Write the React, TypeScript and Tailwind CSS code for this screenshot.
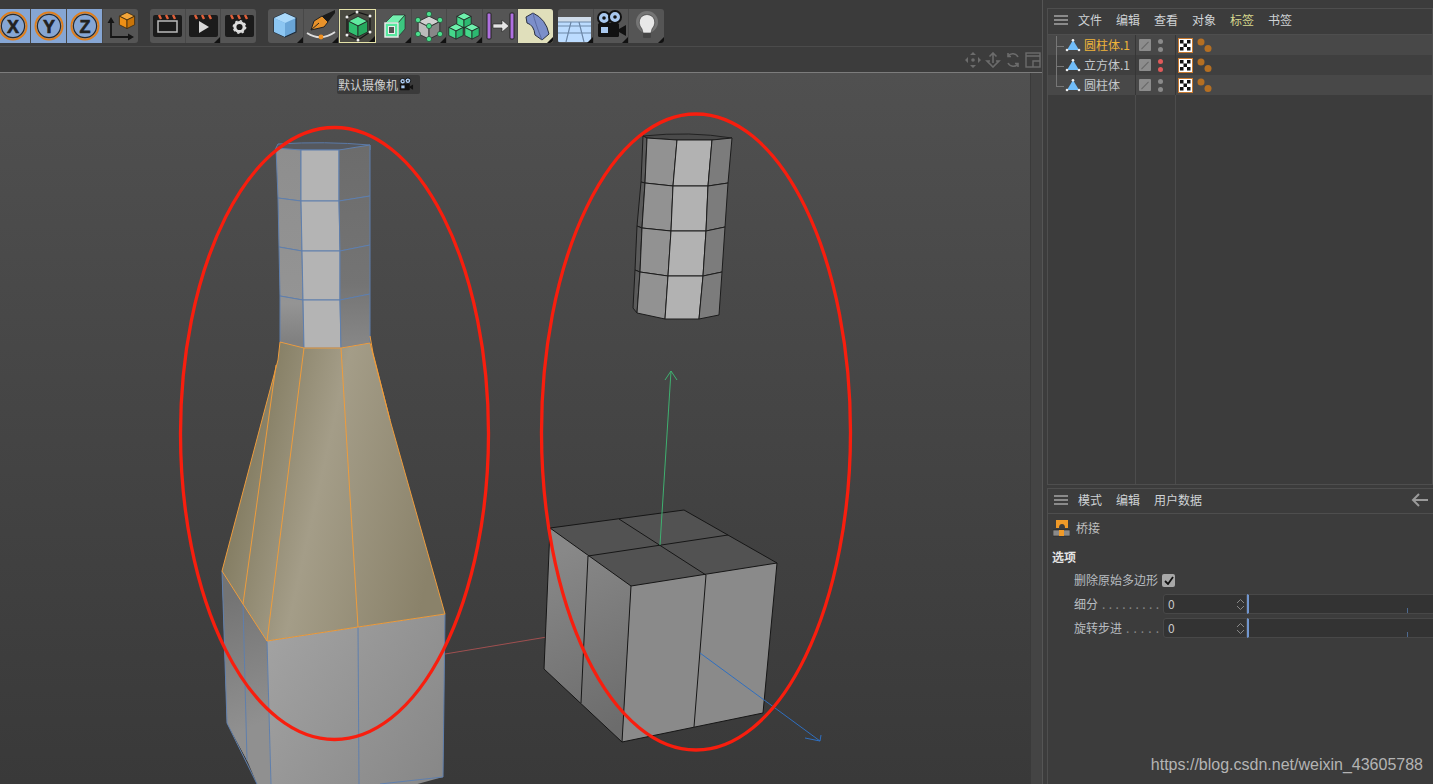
import React from "react";

type P = { children?: React.ReactNode };

const Corner = () => (
  <span className="absolute right-0 bottom-0 w-0 h-0 border-l-[6px] border-l-transparent border-b-[6px] border-b-[#111]" />
);

// toolbar button, icons are drawn in a 34x34 box
const Btn = ({ children, corner, className = "" }: P & { corner?: boolean; className?: string }) => (
  <div className={`relative flex-1 min-w-0 h-full flex items-center justify-center border-r border-[#484848] last:border-r-0 ${className}`}>
    <svg width="34" height="34" viewBox="0 0 34 34" fill="none" className="shrink-0">{children}</svg>
    {corner && <Corner />}
  </div>
);

const Group = ({ children, className = "" }: P & { className?: string }) => (
  <div className={`flex h-[34px] bg-[#555] rounded-[3px] overflow-hidden ${className}`}>{children}</div>
);

const Axis = ({ l }: { l: string }) => (
  <Btn className="bg-[#86a6d4] border-[#4d5a6e]">
    <circle cx="17" cy="17" r="13.5" stroke="#e07f1c" strokeWidth="2" />
    <circle cx="17" cy="17" r="11.6" stroke="#2a2a2a" strokeWidth="1.2" />
    <text x="17" y="23.5" textAnchor="middle" fontSize="18" fontWeight="700" fill="#222" stroke="#222" strokeWidth="0.6" fontFamily="Liberation Sans, sans-serif">{l}</text>
  </Btn>
);

const Clap = ({ children, corner }: P & { corner?: boolean }) => (
  <Btn corner={corner}>
    <rect x="3" y="6" width="29" height="22" rx="2" fill="#1b1b1b" />
    <path d="M9 6l2 4M16 6l2 4M23 6l2 4" stroke="#e0603a" strokeWidth="2.4" />
    {children}
  </Btn>
);

const Cube = ({ x, y, s = 1, top, left, right, stroke = "#222" }: { x: number; y: number; s?: number; top: string; left: string; right: string; stroke?: string }) => (
  <g transform={`translate(${x} ${y}) scale(${s})`} stroke={stroke} strokeWidth={0.8 / s} strokeLinejoin="round">
    <path d="M0 -8L8 -4L0 0L-8 -4Z" fill={top} />
    <path d="M-8 -4L0 0V9L-8 5Z" fill={left} />
    <path d="M8 -4L0 0V9L8 5Z" fill={right} />
  </g>
);

const CameraIcon = ({ w = 34 }: { w?: number }) => (
  <svg width={w} height={w} viewBox="0 0 34 34" fill="none" className="shrink-0">
    <rect x="4" y="14" width="21" height="14" rx="1.5" fill="#111" />
    <circle cx="10" cy="9" r="6" fill="#a9c8ee" stroke="#111" strokeWidth="2" />
    <circle cx="10" cy="9" r="1.8" fill="#111" />
    <circle cx="21" cy="8" r="6" fill="#a9c8ee" stroke="#111" strokeWidth="2" />
    <circle cx="21" cy="8" r="1.8" fill="#111" />
    <rect x="7" y="18" width="7" height="6" fill="#a9c8ee" />
    <path d="M25 20l7-4v11l-7-4z" fill="#111" />
  </svg>
);

const Toolbar = () => (
  <div className="h-[47px] flex items-center pt-[5px] border-b border-[#4b4b4b] bg-[#3b3b3b]">
    <Group className="ml-[-5px] w-[143px] mr-[12px]">
      <Axis l="X" />
      <Axis l="Y" />
      <Axis l="Z" />
      <Btn>
        <path d="M7 13V28H25" stroke="#151515" strokeWidth="1.8" />
        <path d="M7 8l-3.5 6h7zM30 28l-6-3.5v7z" fill="#151515" />
        <Cube x={23} y={11} s={0.95} top="#f4a63a" left="#ee9016" right="#c97408" stroke="#3a2a10" />
      </Btn>
    </Group>
    <Group className="w-[106px] mr-[12px]">
      <Clap>
        <rect x="8" y="12" width="19" height="11" stroke="#bbb" strokeWidth="1.5" />
      </Clap>
      <Clap corner>
        <path d="M13 12l10 6-10 6z" fill="#d8d8d8" />
      </Clap>
      <Clap>
        <circle cx="17.5" cy="18" r="4.6" stroke="#ddd" strokeWidth="3" />
        <circle cx="17.5" cy="18" r="6.2" stroke="#ddd" strokeWidth="1.4" strokeDasharray="2.4 2.4" />
      </Clap>
    </Group>
    <Group className="w-[285px] mr-[5px]">
      <Btn corner>
        <g transform="translate(17 16)">
          <path d="M0 -12L11 -7V7L0 12L-11 7V-7Z" fill="#6aa6d8" stroke="#1d2a38" strokeWidth="1.2" strokeLinejoin="round" />
          <path d="M0 -12L11 -7L0 -2L-11 -7Z" fill="#a9d8fa" />
          <path d="M-11 -7L0 -2V12L-11 7Z" fill="#8cc6f2" />
        </g>
      </Btn>
      <Btn corner>
        <path d="M7 21L10 12L18 7L24 13L20 18Z" fill="#e8922a" stroke="#222" strokeWidth="1" strokeLinejoin="round" />
        <path d="M18 7L31 1V4L24 13Z" fill="#1b1b1b" />
        <path d="M7 21L15 14" stroke="#222" strokeWidth="1" />
        <path d="M3 24Q17 33 31 23" stroke="#ddd" strokeWidth="1.8" />
        <circle cx="17" cy="28" r="2.4" fill="#f09020" />
      </Btn>
      <Btn corner className="bg-[#4a4a42] border border-[#e4e2a8]">
        <Cube x={17} y={17} s={1.2} top="#60eaa0" left="#30c070" right="#26a85e" />
        <path d="M6 8L16 3L29 7V23L17 31L6 26Z" stroke="#151515" strokeWidth="1.2" />
        {[[6, 8], [16, 3], [29, 7], [29, 23], [17, 31], [6, 26]].map(([x, y]) => (
          <circle key={x * y} cx={x} cy={y} r="1.5" fill="#eee" />
        ))}
      </Btn>
      <Btn corner>
        <path d="M9 14L17 6H29L22 14Z" fill="#74f0b0" stroke="#222" strokeWidth="0.6" />
        <path d="M22 14L29 6V20L22 28Z" fill="#3cc880" stroke="#222" strokeWidth="0.6" />
        <rect x="9" y="14" width="13" height="14" fill="#58e8a0" stroke="#eee" strokeWidth="1.4" />
        <rect x="12.5" y="17.5" width="6" height="7" fill="#555" stroke="#eee" strokeWidth="1" />
      </Btn>
      <Btn corner>
        <Cube x={17} y={18} s={1.35} top="#d0d0d0" left="#bbb" right="#888" />
        {[[17, 5], [6, 11], [28, 11], [17, 17], [6, 25], [28, 25], [17, 30]].map(([x, y]) => (
          <circle key={`${x}-${y}`} cx={x} cy={y} r="2.6" fill="#4ce08e" stroke="#1a3a28" strokeWidth="0.6" />
        ))}
      </Btn>
      <Btn corner>
        <Cube x={17} y={11} s={0.9} top="#6ef0ac" left="#44d88a" right="#2cb870" />
        <Cube x={9} y={22} s={0.9} top="#6ef0ac" left="#44d88a" right="#2cb870" />
        <Cube x={25} y={22} s={0.9} top="#6ef0ac" left="#44d88a" right="#2cb870" />
      </Btn>
      <Btn>
        <rect x="4" y="4" width="4" height="26" rx="1" fill="#b070e0" stroke="#222" />
        <rect x="27" y="4" width="4" height="26" rx="1" fill="#b070e0" stroke="#222" />
        <path d="M10 15H19V11L26 17L19 23V19H10Z" fill="#e4e4e4" stroke="#222" strokeWidth="0.6" />
      </Btn>
      <Btn corner className="bg-[#e0dfbb]">
        <path d="M7 8L14 4Q27 10 30 25L23 31L16 26Q15 16 8 14Z" fill="#7c8fca" stroke="#2a3040" strokeWidth="1" />
        <path d="M14 4Q16 14 23 31" stroke="#5a6aa0" strokeWidth="1" />
      </Btn>
    </Group>
    <Group className="w-[106px]">
      <Btn corner>
        <rect x="0" y="8" width="33" height="6" fill="#cfdcea" />
        <rect x="0" y="13" width="33" height="20" fill="#bcdcff" />
        <path d="M0 17H33M0 24H33M13 13L8 33M21 13L26 33M0 13H33" stroke="#6d88a8" strokeWidth="1.2" />
      </Btn>
      <Btn corner>
        <CameraIcon />
      </Btn>
      <Btn corner>
        <circle cx="17" cy="13" r="11" fill="#8a8a8a" opacity="0.6" />
        <path d="M12 20Q7 14 11 8Q17 3 23 8Q27 14 22 20L21 24H13Z" fill="#e8e8e8" stroke="#333" strokeWidth="0.6" />
        <rect x="13" y="24" width="8" height="5" rx="1" fill="#444" />
      </Btn>
    </Group>
  </div>
);

// strip of quads from rings of points, first column is the left most edge
const Rings = ({ rings, fills, stroke, sw = 1 }: { rings: number[][][]; fills: string[]; stroke: string; sw?: number }) => (
  <g stroke={stroke} strokeWidth={sw} strokeLinejoin="round">
    {rings.slice(0, -1).map((ring, r) =>
      ring.slice(0, -1).map((p, c) => {
        const n = rings[r + 1];
        return (
          <polygon
            key={`${r}-${c}`}
            points={`${p} ${ring[c + 1]} ${n[c + 1]} ${n[c]}`}
            fill={fills[c]}
          />
        );
      })
    )}
  </g>
);

const neck = [
  [[276, 148], [301, 150], [339, 150], [370, 145]],
  [[278, 198], [301, 201], [339, 201], [370, 196]],
  [[279, 247], [302, 251], [340, 251], [370, 245]],
  [[280, 296], [303, 300], [340, 300], [370, 294]],
  [[280, 342], [304, 348], [341, 348], [370, 343]],
];

const tube = [
  [[643, 136], [647, 138], [677, 140], [712, 140], [732, 138]],
  [[641, 182], [645, 183], [673, 186], [708, 186], [728, 183]],
  [[637, 226], [642, 228], [671, 231], [706, 231], [725, 227]],
  [[635, 270], [640, 272], [668, 276], [703, 276], [722, 272]],
  [[633, 308], [637, 313], [665, 319], [699, 319], [719, 315]],
];

const Scene = () => (
  <svg className="absolute inset-0" width="1031" height="711" viewBox="0 73 1031 711" fill="none">
    <defs>
      <linearGradient id="flare" x1="222" y1="450" x2="445" y2="500" gradientUnits="userSpaceOnUse">
        <stop offset="0" stopColor="#7a7357" />
        <stop offset="0.45" stopColor="#a49d88" />
        <stop offset="1" stopColor="#8a826a" />
      </linearGradient>
      <linearGradient id="front" x1="267" y1="640" x2="445" y2="760" gradientUnits="userSpaceOnUse">
        <stop offset="0" stopColor="#a2a2a2" />
        <stop offset="1" stopColor="#888" />
      </linearGradient>
      <linearGradient id="side" x1="222" y1="600" x2="270" y2="720" gradientUnits="userSpaceOnUse">
        <stop offset="0" stopColor="#747474" />
        <stop offset="1" stopColor="#909090" />
      </linearGradient>
      <linearGradient id="cubeL" x1="545" y1="560" x2="630" y2="720" gradientUnits="userSpaceOnUse">
        <stop offset="0" stopColor="#888" />
        <stop offset="1" stopColor="#6c6c6c" />
      </linearGradient>
      <linearGradient id="neckL" x1="0" y1="148" x2="0" y2="342" gradientUnits="userSpaceOnUse">
        <stop offset="0" stopColor="#8e8e8e" />
        <stop offset="0.8" stopColor="#949494" />
        <stop offset="1" stopColor="#808080" />
      </linearGradient>
      <linearGradient id="neckR" x1="0" y1="148" x2="0" y2="342" gradientUnits="userSpaceOnUse">
        <stop offset="0" stopColor="#6c6c6c" />
        <stop offset="0.7" stopColor="#747474" />
        <stop offset="1" stopColor="#868686" />
      </linearGradient>
    </defs>

    {/* bottle */}
    <path d="M276 148L278 144Q325 141 370 145L370 150L276 150Z" fill="#55585e" stroke="#5b7aa8" strokeWidth="1" />
    <Rings rings={neck} fills={["url(#neckL)", "#b4b4b4", "url(#neckR)"]} stroke="#5f7fad" />
    <polygon points="222,571 243,604 267,641 358,627 445,614 443,777 359,800 271,800 247,760 227,723" fill="url(#front)" />
    <polygon points="222,571 243,604 267,641 271,800 257,784 247,760 227,723" fill="url(#side)" />
    <path d="M222 571L227 723L257 784M243 604L247 760M267 641L271 784M358 627L359 784M445 614L443 777L380 784" stroke="#5f7fad" strokeWidth="1" />
    <polygon points="280,342 304,348 341,348 370,343 373,353 390,420 445,614 358,627 267,641 243,604 222,571 262,420 278,360" fill="url(#flare)" />
    <path
      d="M280 342L304 348L341 348L370 343M370 336L373 353L390 420L445 614L358 627L267 641L243 604L222 571L262 420L278 360L280 342M304 348L267 641M341 348L358 627M276 365L243 604M370 343L390 420"
      stroke="#ee9c3c"
      strokeWidth="1"
    />

    {/* axes */}
    <path d="M445 654L583 631" stroke="#a05050" strokeWidth="1" />

    {/* floating cylinder */}
    <path d="M643 136Q690 131 732 138L712 140H677L647 138Z" fill="#4a4a4a" stroke="#222" strokeWidth="1" />
    <Rings rings={tube} fills={["#5a5a5a", "#929292", "#b2b2b2", "#7c7c7c"]} stroke="#1c1c1c" />

    {/* cube */}
    <polygon points="550,528 684,510 777,563 631,586" fill="#525252" />
    <polygon points="550,528 631,586 622,742 544,669" fill="url(#cubeL)" />
    <polygon points="631,586 777,563 763,713 622,742" fill="#8a8a8a" />
    <path
      d="M550 528L684 510L777 563L631 586ZM619 519L706 575M728 535L588 556M550 528L544 669L622 742L763 713L777 563M631 586L622 742M706 575L694 727M588 556L581 703"
      stroke="#161616"
      strokeWidth="1"
    />
    <path d="M660 545L671 371M665 380L671 371L677 380" stroke="#3fb070" strokeWidth="1" />
    <path d="M700 653L820 741M805 738L820 741L821 735" stroke="#2f6fc0" strokeWidth="1" />

    {/* red markup */}
    <ellipse cx="334.5" cy="433.5" rx="154" ry="306" stroke="#f81e0e" strokeWidth="3.3" />
    <ellipse cx="696" cy="432" rx="154.5" ry="318" stroke="#f81e0e" strokeWidth="3.3" />
  </svg>
);

const NavIcons = () => (
  <div className="h-[25px] flex items-center justify-end gap-[4px] pr-[1px]">
    <svg width="16" height="16" viewBox="0 0 16 16" fill="#6c6c6c">
      <path d="M8 0l3 3H5zM8 16l-3-3h6zM0 8l3-3v6zM16 8l-3 3V5z" />
      <circle cx="8" cy="8" r="1.8" />
    </svg>
    <svg width="16" height="16" viewBox="0 0 16 16" fill="none" stroke="#6c6c6c" strokeWidth="1.6">
      <path d="M8 11V1M4.5 4.5L8 1l3.5 3.5M5 9H2l6 6 6-6h-3" />
    </svg>
    <svg width="16" height="16" viewBox="0 0 16 16" fill="none" stroke="#6c6c6c" strokeWidth="1.6">
      <path d="M13 5A6 6 0 0 0 3 4M3 11a6 6 0 0 0 10 1M3 1v3.5h3M13 15v-3.5h-3" />
    </svg>
    <svg width="16" height="16" viewBox="0 0 16 16" fill="none" stroke="#6c6c6c" strokeWidth="1.4">
      <rect x="1" y="1" width="14" height="14" />
      <path d="M1 4H15M8 15V9H15" />
    </svg>
  </div>
);

const Viewport = () => (
  <div className="w-[1043px] flex flex-col border-r border-[#555] shrink-0">
    <Toolbar />
    <NavIcons />
    <div className="flex-1 flex border-t border-[#7c7c7c] min-h-0">
      <div className="relative flex-1 bg-gradient-to-b from-[#505050] to-[#393939] overflow-hidden">
        <Scene />
        <div className="absolute left-[337px] top-[2px] h-[19px] w-[83px] flex items-center bg-[#3a3a3a] rounded-[2px] pl-[1px] text-[12px] text-[#d0d0d0]">
          默认摄像机
          <CameraIcon w={16} />
        </div>
      </div>
      <div className="w-[12px] bg-[#444] border-l border-[#3a3a3a]" />
    </div>
  </div>
);

const Menu = ({ items, className }: { items: string[]; className: string }) => (
  <div className={`flex items-center border-b border-[#4e4e4e] pl-[6px] pb-[3px] ${className}`}>
    <svg width="14" height="10" viewBox="0 0 14 10" fill="#8a8a8a" className="mr-[10px]">
      <rect width="14" height="2" />
      <rect y="4" width="14" height="2" />
      <rect y="8" width="14" height="2" />
    </svg>
    <div className="flex gap-[14px] text-[12px] text-[#cfd3d6]">
      {items.map((m) => (
        <span key={m} className={m === "标签" ? "text-[#d8d98e]" : ""}>{m}</span>
      ))}
    </div>
  </div>
);

const Row = ({ name, color, dot, shade }: { name: string; color: string; dot: string; shade: string }) => (
  <div className={`h-[20px] flex items-center ${shade}`}>
    <div className="w-[88px] flex items-center pl-[17px] border-r border-[#363636] h-full">
      <svg width="16" height="14" viewBox="0 0 16 14" className="mr-[3px]">
        <path d="M8 2L14 12H2Z" fill="#70bcf8" />
        <circle cx="8" cy="2.2" r="1.3" fill="#eee" />
        <circle cx="2" cy="12" r="1.3" fill="#eee" />
        <circle cx="14" cy="12" r="1.3" fill="#eee" />
      </svg>
      <span className={`text-[12px] ${color}`}>{name}</span>
    </div>
    <div className="w-[40px] flex items-center gap-[7px] pl-[3px] border-r border-[#363636] h-full">
      <div className="w-[12px] h-[12px] bg-[#8c8c8c] rounded-[1px] flex items-center justify-center">
        <div className="w-[10px] h-px bg-[#666] -rotate-45" />
      </div>
      <div className="flex flex-col gap-[3px]">
        <span className={`w-[5px] h-[5px] rounded-full ${dot}`} />
        <span className={`w-[5px] h-[5px] rounded-full ${dot}`} />
      </div>
    </div>
    <div className="flex items-center gap-[4px] pl-[2px]">
      <svg width="15" height="15" viewBox="0 0 15 15">
        <rect x="0.5" y="0.5" width="14" height="14" fill="#fff" stroke="#c87a30" />
        <path d="M2 2h3.5v3.5H2zM9 2h3.5v3.5H9zM5.5 5.5H9V9H5.5zM2 9h3.5v3.5H2zM9 9h3.5v3.5H9z" fill="#111" />
      </svg>
      <svg width="15" height="15" viewBox="0 0 15 15">
        <circle cx="4" cy="4" r="3.5" fill="#b56f22" />
        <circle cx="11" cy="10.5" r="3.5" fill="#b56f22" />
      </svg>
    </div>
  </div>
);

const ObjectManager = () => (
  <div className="h-[477px] border border-[#4e4e4e] flex flex-col">
    <Menu className="h-[26px]" items={["文件", "编辑", "查看", "对象", "标签", "书签"]} />
    <div className="relative flex-1 flex flex-col">
      <Row name="圆柱体.1" color="text-[#f0b43a]" dot="bg-[#8a8a8a]" shade="bg-[#484848]" />
      <Row name="立方体.1" color="text-[#c4c8cc]" dot="bg-[#e05a5a]" shade="bg-[#3f3f3f]" />
      <Row name="圆柱体" color="text-[#c4c8cc]" dot="bg-[#8a8a8a]" shade="bg-[#484848]" />
      <div className="flex-1 flex">
        <div className="w-[88px] border-r border-[#4c4c4c]" />
        <div className="w-[40px] border-r border-[#4c4c4c]" />
      </div>
      {/* hierarchy lines sit over the rows */}
      <div className="absolute left-[8px] top-[1px] w-[8px] h-[51px] border-l border-[#777]" />
      <div className="absolute left-[8px] top-[11px] w-[8px] border-t border-[#777]" />
      <div className="absolute left-[8px] top-[31px] w-[8px] border-t border-[#777]" />
      <div className="absolute left-[8px] top-[51px] w-[8px] border-t border-[#777]" />
    </div>
  </div>
);

const Field = ({ label, dots }: { label: string; dots: number }) => (
  <div className="flex items-center h-[20px] mb-[4px]">
    <div className="w-[115px] pl-[26px] pr-[4px] flex text-[12px] text-[#b8bcc0] whitespace-nowrap">
      {label}
      <span className="flex-1 flex justify-between pl-[4px] text-[#888]">
        {Array.from({ length: dots }, (_, i) => (
          <span key={i}>.</span>
        ))}
      </span>
    </div>
    <div className="w-[84px] h-[20px] bg-[#333] border border-[#484848] rounded-l-[3px] flex items-center justify-between pl-[4px] pr-[1px] text-[12px] text-[#c8c8c8]">
      0
      <svg width="9" height="13" viewBox="0 0 9 13" fill="none" stroke="#888" strokeWidth="1">
        <path d="M1 5l3.5-3.5L8 5M1 8l3.5 3.5L8 8" />
      </svg>
    </div>
    <div className="relative flex-1 h-[20px] bg-[#333] border-y border-[#484848] border-l-2 border-l-[#7196cf]">
      <span className="absolute left-[158px] bottom-0 w-px h-[5px] bg-[#4e6a90]" />
    </div>
  </div>
);

const Attributes = () => (
  <div className="flex-1 mt-[3px] border-t border-l border-[#4e4e4e] flex flex-col">
    <div className="relative">
      <Menu className="h-[25px]" items={["模式", "编辑", "用户数据"]} />
      <svg width="18" height="14" viewBox="0 0 18 14" fill="none" stroke="#9a9a9a" strokeWidth="2" className="absolute right-[4px] top-[4px]">
        <path d="M17 7H2M8 1L2 7l6 6" />
      </svg>
    </div>
    <div className="h-[27px] flex items-center pl-[5px] gap-[6px] text-[12px] text-[#c0c0c0]">
      <svg width="17" height="18" viewBox="0 0 17 18">
        <path d="M3 1H15V9H12Q12 5 9 5Q6 5 6 9H3Z" fill="#f09a28" />
        <rect y="11" width="17" height="6" fill="#8a8a8a" stroke="#222" strokeWidth="0.6" />
        <rect x="6" y="11" width="5" height="6" fill="#f09a28" />
      </svg>
      桥接
    </div>
    <div className="mt-[6px] h-[20px] pl-[4px] flex items-center text-[12px] font-bold text-[#e4e4e4]">选项</div>
    <div className="h-[26px] flex items-center pl-[26px] gap-[4px] text-[12px] text-[#b8bcc0]">
      删除原始多边形
      <span className="w-[13px] h-[13px] bg-[#a8a8a8] rounded-[2px] flex items-center justify-center">
        <svg width="10" height="9" viewBox="0 0 10 9" fill="none" stroke="#111" strokeWidth="1.8">
          <path d="M1 5l3 3 5-7" />
        </svg>
      </span>
    </div>
    <div className="mt-[1px]">
      <Field label="细分" dots={9} />
      <Field label="旋转步进" dots={5} />
    </div>
  </div>
);

export default function App() {
  return (
    <div className="relative w-[1433px] h-[784px] flex overflow-hidden bg-[#3c3c3c] font-['Noto_Sans_CJK_SC',sans-serif]">
      <Viewport />
      <div className="flex-1 flex flex-col pt-[8px] pl-[4px]">
        <ObjectManager />
        <Attributes />
      </div>
      <span className="absolute right-[10px] bottom-[9px] text-[16px] leading-[20px] text-[#b4b4b4] font-['Liberation_Sans',sans-serif]">
        https://blog.csdn.net/weixin_43605788
      </span>
    </div>
  );
}
